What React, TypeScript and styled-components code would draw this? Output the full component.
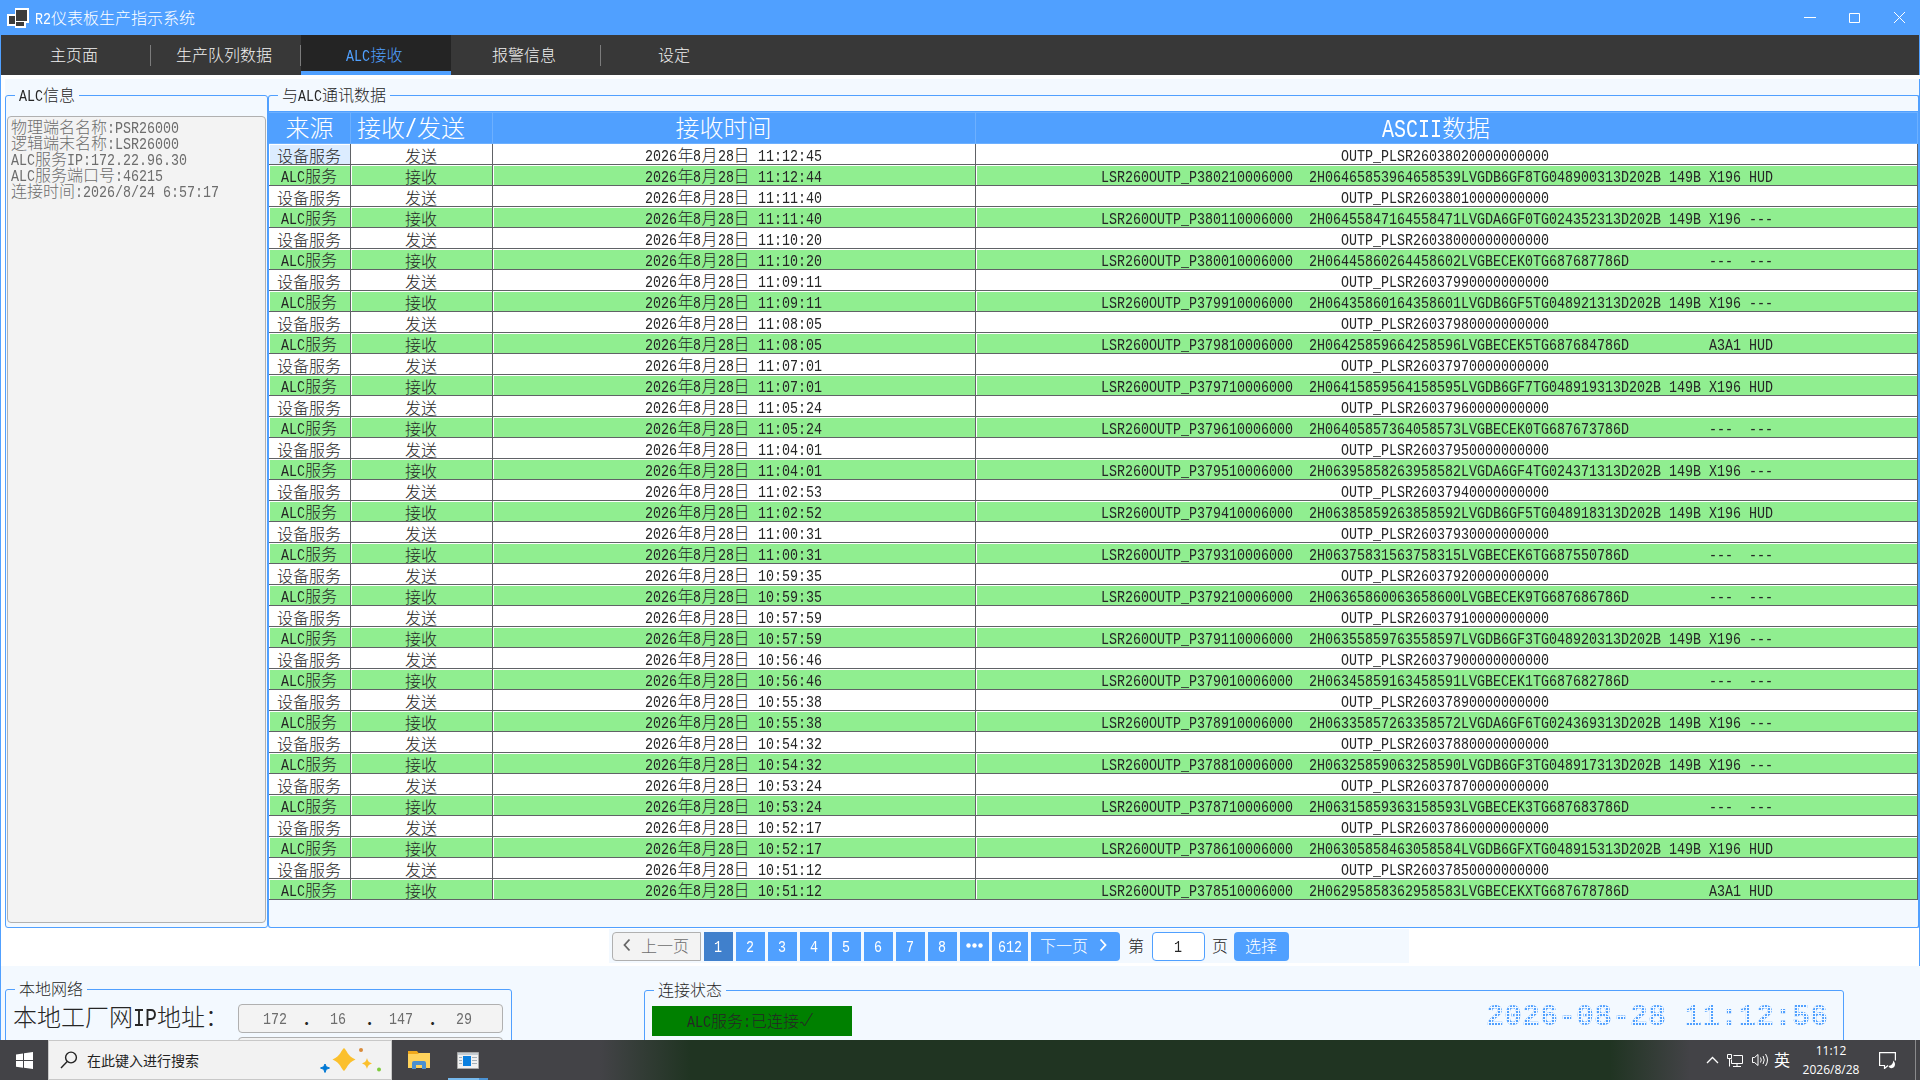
import React from 'react';
import styled, { createGlobalStyle } from 'styled-components';

const BLUE = '#50a0ff';
const PANEL = '#f3f9ff';
const INK = '#262626';

const GlobalStyle = createGlobalStyle`
  * {
    box-sizing: border-box;
  }

  body {
    margin: 0;
    overflow: hidden;
    font-family: 'Noto Sans CJK SC', sans-serif;
    font-size: 16px;
    font-weight: 300;
    color: ${INK};
  }
`;

interface Telegram {
  seq: string;
  sent: string;
  received?: string;
  body: string;
}

const D202B = '313D202B 149B X196 ';
const BLANK = '786D          ';

const telegrams: Telegram[] = [
  { seq: '3802', sent: '11:12:45', received: '11:12:44', body: `2H06465853964658539LVGDB6GF8TG048900${D202B}HUD` },
  { seq: '3801', sent: '11:11:40', body: `2H06455847164558471LVGDA6GF0TG024352${D202B}---` },
  { seq: '3800', sent: '11:10:20', body: `2H06445860264458602LVGBECEK0TG687687${BLANK}---  ---` },
  { seq: '3799', sent: '11:09:11', body: `2H06435860164358601LVGDB6GF5TG048921${D202B}---` },
  { seq: '3798', sent: '11:08:05', body: `2H06425859664258596LVGBECEK5TG687684${BLANK}A3A1 HUD` },
  { seq: '3797', sent: '11:07:01', body: `2H06415859564158595LVGDB6GF7TG048919${D202B}HUD` },
  { seq: '3796', sent: '11:05:24', body: `2H06405857364058573LVGBECEK0TG687673${BLANK}---  ---` },
  { seq: '3795', sent: '11:04:01', body: `2H06395858263958582LVGDA6GF4TG024371${D202B}---` },
  { seq: '3794', sent: '11:02:53', received: '11:02:52', body: `2H06385859263858592LVGDB6GF5TG048918${D202B}HUD` },
  { seq: '3793', sent: '11:00:31', body: `2H06375831563758315LVGBECEK6TG687550${BLANK}---  ---` },
  { seq: '3792', sent: '10:59:35', body: `2H06365860063658600LVGBECEK9TG687686${BLANK}---  ---` },
  { seq: '3791', sent: '10:57:59', body: `2H06355859763558597LVGDB6GF3TG048920${D202B}---` },
  { seq: '3790', sent: '10:56:46', body: `2H06345859163458591LVGBECEK1TG687682${BLANK}---  ---` },
  { seq: '3789', sent: '10:55:38', body: `2H06335857263358572LVGDA6GF6TG024369${D202B}---` },
  { seq: '3788', sent: '10:54:32', body: `2H06325859063258590LVGDB6GF3TG048917${D202B}---` },
  { seq: '3787', sent: '10:53:24', body: `2H06315859363158593LVGBECEK3TG687683${BLANK}---  ---` },
  { seq: '3786', sent: '10:52:17', body: `2H06305858463058584LVGDB6GFXTG048915${D202B}HUD` },
  { seq: '3785', sent: '10:51:12', body: `2H06295858362958583LVGBECEKXTG687678${BLANK}A3A1 HUD` },
];

const rows = telegrams.flatMap(({ seq, sent, received, body }) => [
  { source: '设备服务', kind: '发送', time: sent, data: `OUTP_PLSR260${seq}0000000000` },
  { source: 'ALC服务', kind: '接收', time: received ?? sent, data: `LSR260OUTP_P${seq}10006000  ${body}  ` },
]);

const menuItems = ['主页面', '生产队列数据', 'ALC接收', '报警信息', '设定'];
const alcInfo = [
  '物理端名名称:PSR26000',
  '逻辑端末名称:LSR26000',
  'ALC服务IP:172.22.96.30',
  'ALC服务端口号:46215',
  '连接时间:2026/8/24 6:57:17',
];
const pages = ['1', '2', '3', '4', '5', '6', '7', '8'];

// Latin runs are set half as wide as the Chinese characters beside them
const Mixed: React.FC<{ children: string }> = ({ children }) => (
  <span>
    {children.split(/([\x20-\x7e]+)/).map((part, i) =>
      i % 2 === 1 ? <Half key={i} $chars={part.length}>{part}</Half> : part
    )}
  </span>
);

const App: React.FC = () => {
  return (
    <Screen>
      <GlobalStyle />
      <TitleBar>
        <svg width="22" height="20" viewBox="0 0 22 20">
          <path d="M8 0h14v15h-3v5H8v-2H0V6h8z" fill="#fff" />
          <path d="M9 2h11v11H9zM2 8h6v8H2zM9 14h8v4H9z" fill="#3c3c3c" />
        </svg>
        <Title><Mixed>R2仪表板生产指示系统</Mixed></Title>
        <WindowButtons>
          <svg width="12" height="11" viewBox="0 0 12 11"><path d="M0 5.5h12" stroke="#fff" /></svg>
          <svg width="12" height="11" viewBox="0 0 12 11"><path d="M.5 1.5h10v9H.5z" fill="none" stroke="#fff" /></svg>
          <svg width="12" height="11" viewBox="0 0 12 11"><path d="M0 0l11 11M11 0L0 11" stroke="#fff" /></svg>
        </WindowButtons>
      </TitleBar>

      <Body>
        <Menu>
          {menuItems.map((item, i) => (
            <MenuItem key={item} $active={i === 2} $divided={i < 4 && i !== 2}>
              <Mixed>{item}</Mixed>
            </MenuItem>
          ))}
        </Menu>

        <Main>
          <Group $width={263}>
            <GroupTitle><Mixed>ALC信息</Mixed></GroupTitle>
            <InfoBox>
              {alcInfo.map(line => (
                <InfoLine key={line}><Mixed>{line}</Mixed></InfoLine>
              ))}
            </InfoBox>
          </Group>
          <Group $thickRight>
            <GroupTitle><Mixed>与ALC通讯数据</Mixed></GroupTitle>
            <Table>
              <HeadRow>
                <HeadCell>来源</HeadCell>
                <HeadCell $left><Mixed>接收/发送</Mixed></HeadCell>
                <HeadCell $sortable>接收时间</HeadCell>
                <HeadCell $sortable><Mixed>ASCII数据</Mixed></HeadCell>
              </HeadRow>
              {rows.map((row, i) => (
                <Row key={i} $received={i % 2 === 1}>
                  <Cell $selected={i === 0}><Mixed>{row.source}</Mixed></Cell>
                  <Cell>{row.kind}</Cell>
                  <Cell><Mixed>{`2026年8月28日 ${row.time}`}</Mixed></Cell>
                  <Cell><Mixed>{row.data}</Mixed></Cell>
                </Row>
              ))}
            </Table>
          </Group>
        </Main>

        <PagerRow>
          <Pager>
            <PrevButton>
              <svg width="8" height="14" viewBox="0 0 8 14"><path d="M6.5 1.5L1.5 7l5 5.5" fill="none" stroke="#666" strokeWidth="1.8" /></svg>
              上一页
            </PrevButton>
            {pages.map(page => (
              <PageButton key={page} $current={page === '1'}><Mixed>{page}</Mixed></PageButton>
            ))}
            <PageButton>
              <svg width="17" height="5" viewBox="0 0 17 5" fill="#fff">
                <circle cx="2.5" cy="2.5" r="2.2" />
                <circle cx="8.5" cy="2.5" r="2.2" />
                <circle cx="14.5" cy="2.5" r="2.2" />
              </svg>
            </PageButton>
            <PageButton $width={36}><Mixed>612</Mixed></PageButton>
            <NextButton>
              下一页
              <svg width="8" height="14" viewBox="0 0 8 14"><path d="M1.5 1.5l5 5.5-5 5.5" fill="none" stroke="#fff" strokeWidth="1.8" /></svg>
            </NextButton>
            <PagerLabel>第</PagerLabel>
            <PageInput><Mixed>1</Mixed></PageInput>
            <PagerLabel>页</PagerLabel>
            <SelectButton>选择</SelectButton>
          </Pager>
        </PagerRow>

        <Bottom>
          <NetworkGroup>
            <GroupTitle>本地网络</GroupTitle>
            <FieldRow>
              <FieldLabel><Mixed>本地工厂网IP地址：</Mixed></FieldLabel>
              <IpBox>
                <IpPart><Mixed>172</Mixed></IpPart><IpDot>.</IpDot>
                <IpPart><Mixed>16</Mixed></IpPart><IpDot>.</IpDot>
                <IpPart><Mixed>147</Mixed></IpPart><IpDot>.</IpDot>
                <IpPart><Mixed>29</Mixed></IpPart>
              </IpBox>
            </FieldRow>
            <FieldRow>
              <FieldLabel />
              <IpBox />
            </FieldRow>
          </NetworkGroup>
          <StatusGroup>
            <GroupTitle>连接状态</GroupTitle>
            <StatusRow>
              <StatusBadge>
                <Mixed>ALC服务:已连接</Mixed>
                <svg width="15" height="16" viewBox="0 0 15 16"><path d="M1 11l2-1 2.500 4L13.500 1" fill="none" stroke={INK} /></svg>
              </StatusBadge>
              <LedClock>2026-08-28 11:12:56</LedClock>
            </StatusRow>
          </StatusGroup>
        </Bottom>
      </Body>

      <Taskbar>
        <StartButton>
          <svg width="17" height="17" viewBox="0 0 17 17" fill="#fff">
            <path d="M0 2.400l7-1v6.700H0zM8 1.200L17 0v8.100H8zM0 9.100h7v6.600l-7-1zM8 9.100h9V17l-9-1.200z" />
          </svg>
        </StartButton>
        <SearchBox>
          <svg width="18" height="18" viewBox="0 0 18 18" fill="none" stroke="#222" strokeWidth="1.400">
            <circle cx="11" cy="6.500" r="5.400" />
            <path d="M7.200 10.500L1 17" />
          </svg>
          <SearchText>在此键入进行搜索</SearchText>
          <svg width="62" height="30" viewBox="0 0 62 30">
            <path d="M24 3c3 2 3 8 11.500 11.500C27 18 27 24 24 26c-3-2-3-8-11.500-11.500C21 11 21 5 24 3z" fill="#fbc02d" />
            <path d="M47 13c1 4 2 4 5 5.500-3 1-4 2-5 5.500-1-3.500-2-4.500-5-5.500 3-1.500 4-1.500 5-5.500z" fill="#fbc02d" />
            <path d="M5 19l1.300 2.700L9.500 23l-3.200 1.300L5 27.500l-1.300-3.200L.5 23l3.200-1.300z" fill="#0078d4" stroke="#0078d4" />
            <circle cx="41" cy="5" r="2" fill="#d98b3a" />
            <circle cx="59" cy="24.500" r="2" fill="#7ecb3c" />
          </svg>
        </SearchBox>
        <TaskIcon>
          <svg width="22" height="19" viewBox="0 0 22 19">
            <path d="M0 0h9l1.500 2H22v15H0z" fill="#f0a91c" />
            <path d="M0 3h10l1-1h11v15H0z" fill="#ffd35c" />
            <path d="M4 18v-6q0-2 2-2h10q2 0 2 2v6h-4v-4H8v4z" fill="#4a90d0" />
          </svg>
        </TaskIcon>
        <TaskIcon $running>
          <svg width="22" height="17" viewBox="0 0 22 17">
            <path d="M.5 .5h21v16H.5z" fill="#f1f1f1" stroke="#a9a9a9" />
            <path d="M1 1h20v2H1z" fill="#c4ccd2" />
            <path d="M6 4h8v10H6z" fill="#0a80e0" />
            <path d="M2 5.500h3M2 8.500h3M2 11.500h3M15 5.500h5M15 8.500h5M15 11.500h5" stroke="#a4b0b8" />
          </svg>
        </TaskIcon>
        <Tray>
          <svg width="13" height="8" viewBox="0 0 13 8"><path d="M1 7l5.500-5.500L12 7" fill="none" stroke="#fff" strokeWidth="1.300" /></svg>
          <svg width="17" height="15" viewBox="0 0 17 15" fill="none" stroke="#fff">
            <path d="M6.500 2.500h9v8h-11v-4M.5 1.500h4v4h-4zM2.500 5.500v8M6 13.500h8M10 10.500v3" />
          </svg>
          <svg width="17" height="14" viewBox="0 0 17 14" fill="none" stroke="#fff">
            <path d="M.5 4.500h2l3.500-3v11l-3.500-3h-2zM8.500 4.500q1.500 2.500 0 5M11 3q2.500 4 0 8M13.500 1q4 6 0 12" />
          </svg>
          <Ime>英</Ime>
          <TrayClock>
            <span>11:12</span>
            <span>2026/8/28</span>
          </TrayClock>
          <svg width="17" height="17" viewBox="0 0 17 17" fill="none" stroke="#fff" strokeWidth="1.200">
            <path d="M9 13.500L5.500 16.500v-3H.6V.6h15.800v8" />
            <path d="M14.500 8.500q3 4.500 0 7-3.500 2-5-1.500 4-.5 5-5.500z" fill="#fff" strokeWidth="0" />
          </svg>
        </Tray>
      </Taskbar>
    </Screen>
  );
};

const Screen = styled.div`
  display: flex;
  flex-direction: column;
  width: 1920px;
  height: 1080px;
  overflow: hidden;
  background: #fff;
`;

// 0.6em advance condensed to 0.5em
const Half = styled.span<{ $chars: number }>`
  display: inline-block;
  width: ${props => props.$chars * 0.5}em;
  font-family: 'Liberation Mono', monospace;
  font-weight: 400;
  line-height: 0.9;
  transform: scale(0.8333, 1.04);
  transform-origin: 0 80%;
  white-space: pre;
`;

const TitleBar = styled.header`
  display: flex;
  align-items: center;
  flex: none;
  height: 35px;
  padding: 0 14px 0 7px;
  background: ${BLUE};
  color: #fff;
`;

const Title = styled.div`
  flex: 1;
  margin-left: 6px;
  padding-bottom: 2px;
`;

const WindowButtons = styled.div`
  display: flex;
  gap: 33px;
  width: 102px;
`;

const Body = styled.div`
  display: flex;
  flex-direction: column;
  flex: none;
  height: 1005px;
  border-left: 1px solid ${BLUE};
  overflow: hidden;
`;

const Menu = styled.nav`
  display: flex;
  flex: none;
  height: 40px;
  border-right: 1px solid ${BLUE};
  background: #383838;
`;

const MenuItem = styled.div<{ $active: boolean; $divided: boolean }>`
  display: flex;
  align-items: center;
  justify-content: center;
  width: 150px;
  padding: ${props => (props.$active ? '1px 3px 0 0' : '0 4px 3px 0')};
  color: ${props => (props.$active ? BLUE : '#f0f0f0')};
  background: ${props =>
    props.$active
      ? '#242424'
      : props.$divided
        ? 'linear-gradient(#7c7c7c, #7c7c7c) right 10px / 1px 21px no-repeat'
        : 'none'};
  border-bottom: ${props => (props.$active ? `4px solid ${BLUE}` : 'none')};
`;

const Main = styled.main`
  display: flex;
  flex: none;
  height: 853px;
  margin: 4px 0 0 4px;
  padding-top: 16px;
  background: ${PANEL};
  box-shadow: inset -1px 0 ${BLUE};
`;

const Group = styled.section<{ $width?: number; $thickRight?: boolean }>`
  display: flex;
  flex-direction: column;
  flex: ${props => (props.$width ? `0 0 ${props.$width}px` : '1')};
  height: 833px;
  border: 1px solid ${BLUE};
  border-right-width: ${props => (props.$thickRight ? 2 : 1)}px;
  border-radius: 3px;
`;

const GroupTitle = styled.h2`
  align-self: flex-start;
  height: 20px;
  margin: -11px 0 0 9px;
  padding: 0 4px;
  background: ${PANEL};
  font-size: 16px;
  font-weight: 300;
  line-height: 18px;
`;

const InfoBox = styled.div`
  height: 807px;
  margin: 11px 1px 0;
  padding: 1px 3px;
  border: 1px solid #b0b0b0;
  border-radius: 4px;
  background: #f3f3f3;
  color: #6d6d6d;
`;

const InfoLine = styled.div`
  height: 16px;
  line-height: 16px;
  white-space: nowrap;
`;

const Table = styled.div`
  margin-top: 6px;
`;

const HeadRow = styled.div`
  display: grid;
  grid-template: 32px / 82px 142px 483px 1fr;
  height: 33px;
  background: ${BLUE};
  border-top: 1px solid ${BLUE};
`;

const HeadCell = styled.div<{ $left?: boolean; $sortable?: boolean }>`
  display: flex;
  align-items: center;
  justify-content: ${props => (props.$left ? 'flex-start' : 'center')};
  padding: 0 ${props => (props.$sortable ? 21 : 0)}px 2px ${props => (props.$left ? 6 : 0)}px;
  border: solid #6db0ff;
  border-width: 1px 1px 1px 0;
  color: #fff;
  font-size: 24px;
  line-height: 28px;
  white-space: nowrap;
`;

const Row = styled.div<{ $received: boolean }>`
  display: grid;
  grid-template: 21px / 82px 142px 483px 1fr;
  height: 21px;
  --fill: ${props => (props.$received ? '#90ee90' : '#fff')};
`;

const Cell = styled.div<{ $selected?: boolean }>`
  display: flex;
  align-items: center;
  justify-content: center;
  padding: 1px 1px 0 0;
  border-right: 1px solid #606266;
  border-bottom: 1px solid #606266;
  background: ${props => (props.$selected ? '#dcecff' : 'var(--fill)')};
  box-shadow: inset 1px 1px #fff;
  line-height: 18px;
  white-space: pre;

  &:last-child {
    padding-right: 3px;
  }
`;

const PagerRow = styled.div`
  display: flex;
  flex: none;
  height: 38px;
  margin-top: -4px;
  padding: 1px 0 3px 608px;
  background: #fff;
  border-right: 1px solid ${BLUE};
`;

const Pager = styled.div`
  display: flex;
  align-items: center;
  gap: 3px;
  width: 800px;
  padding-left: 3px;
  background: ${PANEL};
`;

const PageButton = styled.button<{ $current?: boolean; $width?: number }>`
  display: flex;
  align-items: center;
  justify-content: center;
  width: ${props => props.$width ?? 29}px;
  height: 29px;
  padding: 0 1px 2px 0;
  border: 0;
  background: ${props => (props.$current ? '#4080cc' : BLUE)};
  color: #fff;
  font: inherit;
`;

const PrevButton = styled(PageButton)`
  gap: 10px;
  width: 89px;
  border: 1px solid #b0b0b0;
  border-radius: 4px 0 0 4px;
  background: #f3f3f3;
  color: #6d6d6d;
`;

const NextButton = styled(PageButton)`
  gap: 11px;
  width: 89px;
  padding-right: 4px;
  border-radius: 0 4px 4px 0;
`;

const PagerLabel = styled.span`
  width: 16px;
  margin: 0 3px 2px 5px;
`;

const PageInput = styled.div`
  display: flex;
  align-items: center;
  justify-content: center;
  width: 53px;
  height: 29px;
  margin: 0 -1px 0 2px;
  padding: 0 1px 3px 0;
  border: 1px solid ${BLUE};
  border-radius: 4px;
  background: #fff;
`;

const SelectButton = styled(PageButton)`
  width: 55px;
  border-radius: 4px;
`;

const Bottom = styled.div`
  display: flex;
  align-items: flex-start;
  flex: none;
  height: 74px;
  padding: 23px 0 0 4px;
  overflow: hidden;
  background: ${PANEL};
`;

const NetworkGroup = styled.section`
  display: flex;
  flex-direction: column;
  width: 507px;
  height: 120px;
  border: 1px solid ${BLUE};
  border-radius: 3px;
`;

const FieldRow = styled.div`
  display: flex;
  height: 29px;
  margin: 5px 8px -1px 7px;
`;

const FieldLabel = styled.div`
  width: 225px;
  font-size: 24px;
  line-height: 24px;
  white-space: nowrap;
`;

const IpBox = styled.div`
  display: flex;
  align-items: center;
  width: 265px;
  height: 29px;
  padding: 0 6px 4px 4px;
  border: 1px solid #b0b0b0;
  border-radius: 4px;
  background: #f3f3f3;
`;

const IpPart = styled.span`
  width: 63px;
  color: #6d6d6d;
  text-align: center;
`;

const IpDot = styled.span`
  width: 0;
  margin-top: 3px;
  font-weight: 700;
  text-indent: -2px;
`;

const StatusGroup = styled.section`
  display: flex;
  flex-direction: column;
  width: 1200px;
  height: 120px;
  margin: 1px 0 0 132px;
  border: 1px solid ${BLUE};
  border-radius: 3px;
`;

const StatusRow = styled.div`
  display: flex;
  justify-content: space-between;
  margin: 6px 15px 0 7px;
`;

const StatusBadge = styled.div`
  display: flex;
  align-items: center;
  justify-content: center;
  width: 200px;
  height: 30px;
  padding: 0 3px 2px 0;
  background: #008000;
`;

// Dotted display: the glyphs are filled with a 3px dot grid
const LedClock = styled.div`
  height: 30px;
  margin-top: -4px;
  background:
    repeating-linear-gradient(90deg, transparent 0 2px, ${PANEL} 2px 3px),
    repeating-linear-gradient(transparent 0 2px, ${PANEL} 2px 3px),
    ${BLUE};
  background-clip: text;
  -webkit-background-clip: text;
  color: transparent;
  font-family: 'Liberation Mono', monospace;
  font-size: 30px;
  font-weight: 700;
  line-height: 30px;
  white-space: pre;
`;

const Taskbar = styled.footer`
  display: flex;
  flex: none;
  height: 40px;
  background: linear-gradient(90deg, #434347 600px, #203422 690px, #203422 1610px, #434347 1690px);
`;

const StartButton = styled.div`
  display: flex;
  align-items: center;
  justify-content: center;
  width: 48px;
`;

const SearchBox = styled.div`
  display: flex;
  align-items: center;
  width: 344px;
  padding: 0 9px 0 11px;
  border: 1px solid #c8c8c8;
  background: #f2f2f2;
`;

const SearchText = styled.span`
  flex: 1;
  margin-left: 9px;
  color: #222;
  font-size: 14px;
  font-weight: 400;
`;

const TaskIcon = styled.div<{ $running?: boolean }>`
  display: flex;
  align-items: center;
  justify-content: center;
  width: ${props => (props.$running ? 40 : 54)}px;
  margin-right: ${props => (props.$running ? 0 : 2)}px;
  background: ${props =>
    props.$running
      ? 'linear-gradient(90deg, #76b9ed 31px, #4a92d4 31px) bottom / 100% 2px no-repeat'
      : 'none'};
`;

const Tray = styled.div`
  display: flex;
  align-items: center;
  gap: 8px;
  margin-left: auto;
  margin-right: 4px;
  padding-right: 19px;
  border-right: 1px solid #8a8a8c;
  color: #fff;
`;

const Ime = styled.span`
  margin-left: -3px;
  padding-bottom: 2px;
  font-weight: 400;
`;

const TrayClock = styled.div`
  display: flex;
  flex-direction: column;
  align-items: center;
  width: 76px;
  margin: 0 2px 0 -5px;
  font-family: 'Open Sans', sans-serif;
  font-size: 12px;
  font-weight: 400;
  line-height: 19px;
`;

export default App;
